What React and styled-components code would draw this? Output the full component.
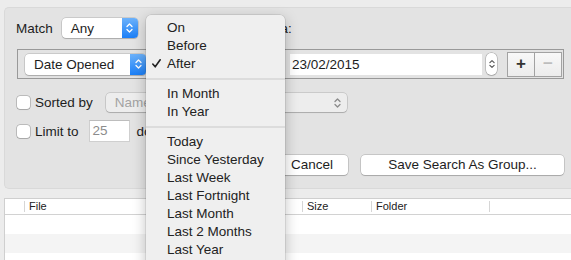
import React from "react";
import styled, { createGlobalStyle } from "styled-components";

const GlobalStyle = createGlobalStyle`
  html, body {
    margin: 0;
    padding: 0;
  }
  body {
    font-family: "Liberation Sans", Arial, sans-serif;
    font-size: 13.5px;
    color: #1d1d1d;
  }
  * {
    box-sizing: border-box;
  }
`;

const Chevrons = ({ color = "#fff", width = 7 }) => (
  <svg width={width} height="12" viewBox="0 0 7 12" fill="none">
    <path d="M1 4.5 L3.5 2 L6 4.5" stroke={color} strokeWidth="1.3" strokeLinecap="round" strokeLinejoin="round" />
    <path d="M1 7.5 L3.5 10 L6 7.5" stroke={color} strokeWidth="1.3" strokeLinecap="round" strokeLinejoin="round" />
  </svg>
);

const Check = () => (
  <svg width="9" height="9" viewBox="0 0 9 9" fill="none">
    <path d="M0.8 5 L3.2 7.8 L8.2 0.8" stroke="#222" strokeWidth="1.6" strokeLinecap="round" strokeLinejoin="round" />
  </svg>
);

const Popup = ({ label, width, height = 20, disabled }) => (
  <PopupBox $width={width} $height={height} $disabled={disabled}>
    <PopupLabel $disabled={disabled}>{label}</PopupLabel>
    {disabled ? (
      <PlainArrows>
        <Chevrons color="#8a8a8a" />
      </PlainArrows>
    ) : (
      <BlueArrows>
        <Chevrons />
      </BlueArrows>
    )}
  </PopupBox>
);

const menuGroups = [
  ["On", "Before", "After"],
  ["In Month", "In Year"],
  ["Today", "Since Yesterday", "Last Week", "Last Fortnight", "Last Month", "Last 2 Months", "Last Year"],
];

const App = () => {
  return (
    <Window>
      <GlobalStyle />
      <Panel>
        <MatchRow>
          <Label>Match</Label>
          <Spacer $w={9} />
          <Popup label="Any" width={76} />
          <Spacer $w={16} />
          <Label>of the following criteria:</Label>
        </MatchRow>

        <CriteriaBox>
          <Popup label="Date Opened" width={121} height={21} />
          <Spacer $w={8} />
          {/* operator popup sits under the open menu */}
          <Popup label="" width={130} height={21} />
          <Spacer $w={6} />
          <DateField>23/02/2015</DateField>
          <Spacer $w={4} />
          <DateStepper>
            <Chevrons color="#555" width={6} />
          </DateStepper>
          <Spacer $w={10} />
          <Segmented>
            <SegButton>+</SegButton>
            <SegButton $disabled>−</SegButton>
          </Segmented>
        </CriteriaBox>

        <OptionRow $top={14} $height={19}>
          <Checkbox />
          <Label>Sorted by</Label>
          <Spacer $w={13} />
          <Popup label="Name" width={241} height={19} disabled />
        </OptionRow>

        <OptionRow $top={8} $height={22}>
          <Checkbox />
          <Label>Limit to</Label>
          <Spacer $w={10} />
          <NumberField>25</NumberField>
          <Spacer $w={7} />
          <Label>documents</Label>
        </OptionRow>

        <ButtonRow>
          <PushButton $width={72}>Cancel</PushButton>
          <PushButton $width={203}>Save Search As Group...</PushButton>
        </ButtonRow>
      </Panel>

      <Table>
        <HeaderRow>
          <HeaderCell $width={19} $first />
          <HeaderCell $width={278}>File</HeaderCell>
          <HeaderCell $width={69}>Size</HeaderCell>
          <HeaderCell $width={118}>Folder</HeaderCell>
          <HeaderCell $width={82} />
        </HeaderRow>
        <Row />
        <Row $alt />
        <Row />
      </Table>

      <Menu>
        {menuGroups.map((group, gi) => (
          <React.Fragment key={gi}>
            {gi > 0 && <Separator />}
            {group.map((item) => (
              <MenuItem key={item}>
                {item === "After" && (
                  <CheckMark>
                    <Check />
                  </CheckMark>
                )}
                {item}
              </MenuItem>
            ))}
          </React.Fragment>
        ))}
      </Menu>
    </Window>
  );
};

const Window = styled.div`
  position: relative;
  width: 571px;
  height: 260px;
  overflow: hidden;
  background: #ececec;
  padding: 7px 0 0 4px;
`;

const Panel = styled.div`
  height: 182px;
  background: #e3e3e3;
  border: 1px solid #d9d9d9;
  border-right: none;
  border-radius: 5px 0 0 5px;
  padding: 10px 7px 0 11px;
`;

const MatchRow = styled.div`
  display: flex;
  align-items: center;
  height: 20px;
`;

const Label = styled.span`
  white-space: nowrap;
  color: #1d1d1d;
`;

const Spacer = styled.div`
  flex: none;
  width: ${(p) => p.$w}px;
`;

const PopupBox = styled.div`
  flex: none;
  display: flex;
  align-items: stretch;
  width: ${(p) => p.$width}px;
  height: ${(p) => p.$height}px;
  border-radius: 4px;
  background: ${(p) => (p.$disabled ? "#ededed" : "#fff")};
  box-shadow: 0 0 0 0.5px rgba(0, 0, 0, 0.22), 0 1px 1px rgba(0, 0, 0, 0.15);
  overflow: hidden;
`;

const PopupLabel = styled.span`
  flex: 1;
  display: flex;
  align-items: center;
  padding-left: 9px;
  white-space: nowrap;
  color: ${(p) => (p.$disabled ? "#a3a3a3" : "#1d1d1d")};
`;

const BlueArrows = styled.span`
  width: 16px;
  display: flex;
  align-items: center;
  justify-content: center;
  background: linear-gradient(#6cb2fb, #1b7ff7);
`;

const PlainArrows = styled.span`
  width: 18px;
  display: flex;
  align-items: center;
  justify-content: center;
`;

const CriteriaBox = styled.div`
  display: flex;
  align-items: center;
  height: 30px;
  margin: 11px 0 0 1px;
  padding-left: 7px;
  border: 1px solid #999;
`;

const DateField = styled.div`
  flex: none;
  width: 192px;
  height: 21px;
  background: #fff;
  padding-left: 2px;
  line-height: 21px;
`;

const DateStepper = styled.div`
  flex: none;
  width: 11px;
  height: 22px;
  border-radius: 5px;
  background: #fff;
  box-shadow: 0 0 0 0.5px rgba(0, 0, 0, 0.3), 0 1px 1px rgba(0, 0, 0, 0.1);
  display: flex;
  align-items: center;
  justify-content: center;
`;

const Segmented = styled.div`
  flex: none;
  display: flex;
  width: 55px;
  height: 25px;
  border: 1px solid #a2a2a2;
  background: linear-gradient(#f8f8f8, #ececec);
`;

const SegButton = styled.div`
  flex: 1;
  display: flex;
  align-items: center;
  justify-content: center;
  font-size: 17px;
  font-weight: bold;
  color: ${(p) => (p.$disabled ? "#bdbdbd" : "#333")};
  & + & {
    border-left: 1px solid #a2a2a2;
  }
`;

const OptionRow = styled.div`
  display: flex;
  align-items: center;
  height: ${(p) => p.$height}px;
  margin-top: ${(p) => p.$top}px;
  padding-left: 1px;
`;

const Checkbox = styled.span`
  flex: none;
  width: 13px;
  height: 13px;
  margin-right: 5px;
  border-radius: 3px;
  background: #fff;
  box-shadow: 0 0 0 0.5px rgba(0, 0, 0, 0.35), 0 1px 1px rgba(0, 0, 0, 0.1);
`;

const NumberField = styled.div`
  flex: none;
  width: 41px;
  height: 22px;
  background: #fff;
  border: 1px solid #cfcfcf;
  border-top-color: #bdbdbd;
  color: #8c8c8c;
  padding-left: 3px;
  line-height: 20px;
`;

const ButtonRow = styled.div`
  display: flex;
  justify-content: flex-end;
  gap: 13px;
  margin-top: 13px;
`;

const PushButton = styled.div`
  width: ${(p) => p.$width}px;
  height: 20px;
  line-height: 20px;
  text-align: center;
  background: #fff;
  border-radius: 4px;
  box-shadow: 0 0 0 0.5px rgba(0, 0, 0, 0.25), 0 1px 1px rgba(0, 0, 0, 0.15);
  white-space: nowrap;
`;

const Table = styled.div`
  margin-top: 9px;
  background: #fff;
  border-left: 1px solid #cfcfcf;
  border-top: 1px solid #cfcfcf;
`;

const HeaderRow = styled.div`
  display: flex;
  align-items: center;
  height: 16px;
  border-bottom: 1px solid #d2d2d2;
`;

const HeaderCell = styled.div`
  flex: none;
  width: ${(p) => p.$width}px;
  height: 11px;
  line-height: 11px;
  padding-left: 4px;
  font-size: 11px;
  color: #222;
  border-left: ${(p) => (p.$first ? "none" : "1px solid #d6d6d6")};
`;

const Row = styled.div`
  height: 19px;
  background: ${(p) => (p.$alt ? "#f4f4f4" : "#fff")};
`;

const Menu = styled.div`
  position: absolute;
  left: 146px;
  top: 15px;
  width: 139px;
  height: 260px;
  padding-top: 4px;
  background: #efefef;
  border-radius: 5px;
  box-shadow: 0 0 0 0.5px rgba(0, 0, 0, 0.15), 0 4px 14px rgba(0, 0, 0, 0.25);
`;

const MenuItem = styled.div`
  position: relative;
  height: 18px;
  line-height: 18px;
  padding-left: 21px;
  color: #222;
  white-space: nowrap;
`;

const CheckMark = styled.span`
  position: absolute;
  left: 6px;
  top: 4px;
  display: flex;
`;

const Separator = styled.div`
  height: 2px;
  margin: 5px 0;
  background: #dcdcdc;
`;

export default App;
